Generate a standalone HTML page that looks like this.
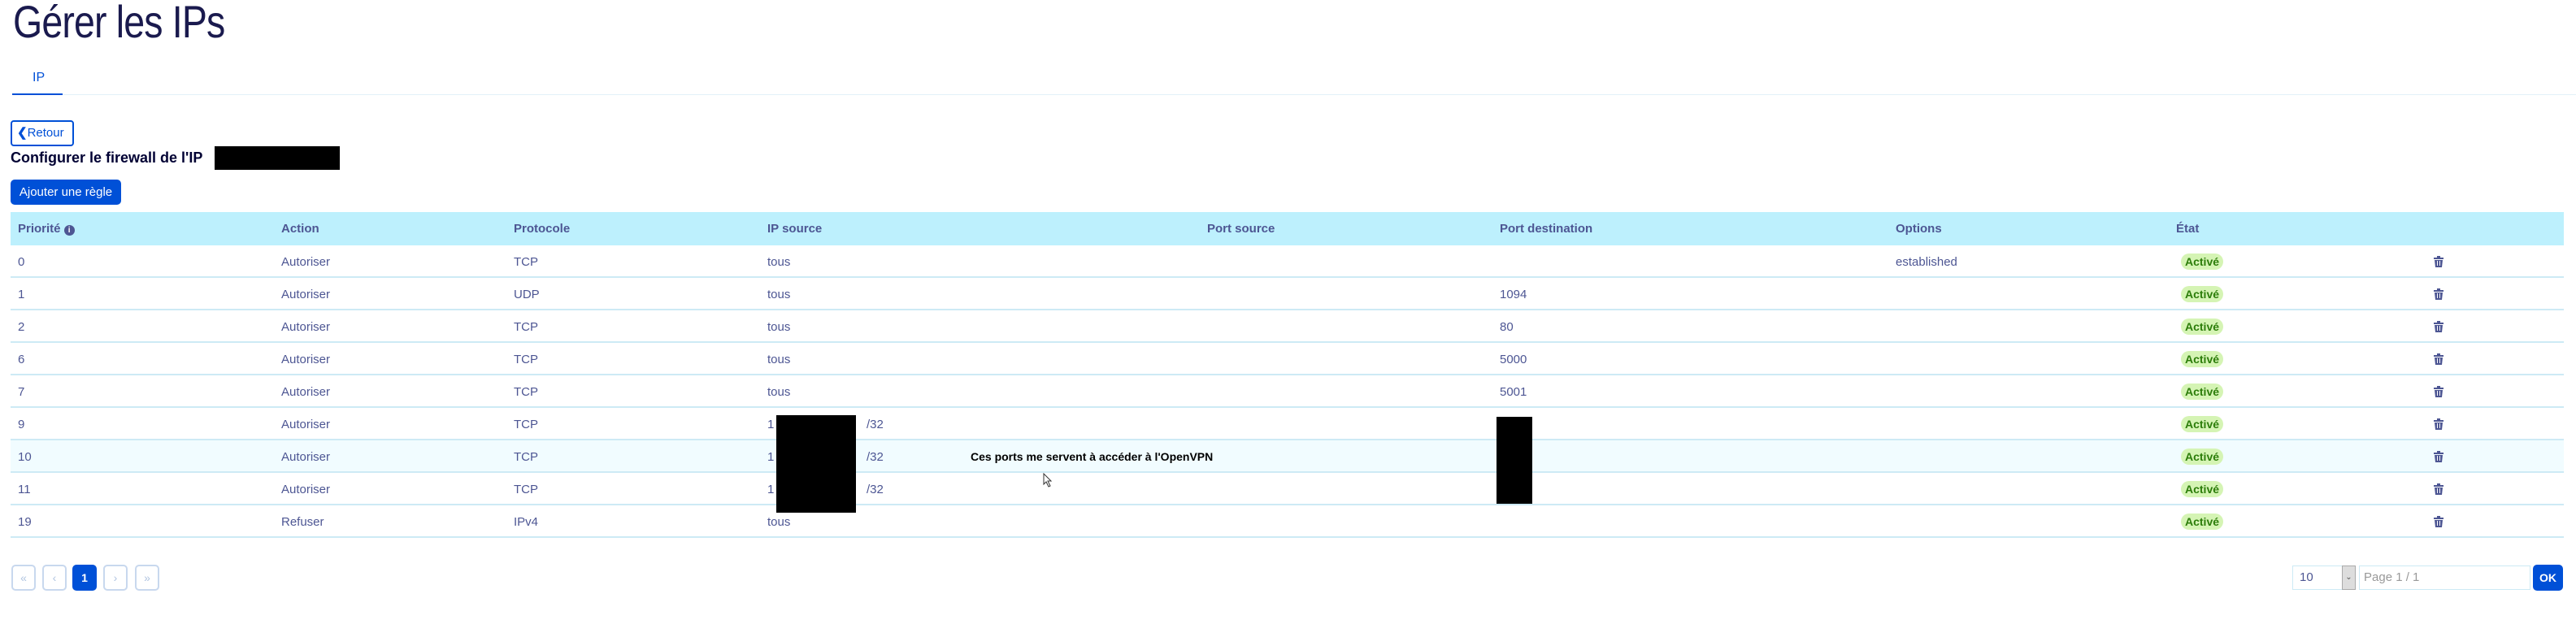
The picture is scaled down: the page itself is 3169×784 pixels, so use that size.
<!DOCTYPE html>
<html><head><meta charset="utf-8"><style>
*{margin:0;padding:0;box-sizing:border-box}
body{width:3169px;height:784px;background:#fff;position:relative;overflow:hidden;font-family:"Liberation Sans",sans-serif;color:#4d5693}
.a{position:absolute;white-space:nowrap}
.title{left:16px;top:-6px;font-size:56px;color:#1a1a4e;font-weight:300;transform:scaleX(.83);transform-origin:left top;letter-spacing:-1px}
.row{position:absolute;left:13px;width:3141px;height:40px;border-bottom:2px solid #cdeaf5;font-size:15px}
.row span{position:absolute;top:12px}
.hdr{position:absolute;left:13px;top:261px;width:3141px;height:41px;background:#bdf0fd;font-size:15px;font-weight:bold;color:#4d5693}
.hdr span{position:absolute;top:12px}
.pill{background:#d5f4b4;color:#2c7d0a;border-radius:10px;padding:2px 5px;font-size:14px;top:10px!important;font-weight:bold}
.tr{top:13px!important}
.pg{position:absolute;top:695px;width:30px;height:32px;border:2px solid #c8d8ee;border-radius:5px;color:#b0c4e0;font-size:14px;text-align:center;line-height:28px}
</style></head><body>
<svg width="0" height="0" style="position:absolute"><defs><symbol id="t" viewBox="0 0 12 14"><rect x="0" y="2" width="12" height="2" fill="#4d5693"/><rect x="4" y="0" width="4" height="2" fill="#4d5693"/><path d="M1 5 H11 L10 14 H2 Z" fill="#4d5693"/><rect x="4" y="6" width="1" height="6" fill="#fff"/><rect x="7" y="6" width="1" height="6" fill="#fff"/></symbol></defs></svg>
<div class="a title">Gérer les IPs</div>
<div class="a" style="left:40px;top:87px;font-size:16px;color:#0050d7">IP</div>
<div class="a" style="left:15px;top:115px;width:62px;height:2px;background:#0050d7"></div>
<div class="a" style="left:77px;top:116px;width:3092px;height:1px;background:#e3f1f8"></div>
<div class="a" style="left:13px;top:148px;width:78px;height:32px;border:2px solid #0050d7;border-radius:4px;color:#0050d7;font-size:15px;line-height:28px;padding-left:6px"><b>&#10094;</b>Retour</div>
<div class="a" style="left:13px;top:184px;font-size:18px;font-weight:bold;color:#000033">Configurer le firewall de l'IP</div>
<div class="a" style="left:264px;top:180px;width:154px;height:29px;background:#000"></div>
<div class="a" style="left:13px;top:221px;width:136px;height:31px;background:#0050d7;border-radius:5px;color:#fff;font-size:15px;line-height:31px;text-align:center">Ajouter une règle</div>
<div class="hdr"><span style="left:9px">Priorité <span style="position:static;display:inline-block;width:13px;height:13px;border-radius:50%;background:#4d5693;color:#fff;font-size:10px;text-align:center;line-height:13px">i</span></span><span style="left:333px">Action</span><span style="left:619px">Protocole</span><span style="left:931px">IP source</span><span style="left:1472px">Port source</span><span style="left:1832px">Port destination</span><span style="left:2319px">Options</span><span style="left:2664px">État</span></div>
<div class="row" style="top:302px"><span style="left:9px">0</span><span style="left:333px">Autoriser</span><span style="left:619px">TCP</span><span style="left:931px">tous</span><span style="left:2319px">established</span><span class="pill" style="left:2670px">Activé</span><span class="tr" style="left:2981px"><svg width="12" height="14"><use href="#t"/></svg></span></div>
<div class="row" style="top:342px"><span style="left:9px">1</span><span style="left:333px">Autoriser</span><span style="left:619px">UDP</span><span style="left:931px">tous</span><span style="left:1832px">1094</span><span class="pill" style="left:2670px">Activé</span><span class="tr" style="left:2981px"><svg width="12" height="14"><use href="#t"/></svg></span></div>
<div class="row" style="top:382px"><span style="left:9px">2</span><span style="left:333px">Autoriser</span><span style="left:619px">TCP</span><span style="left:931px">tous</span><span style="left:1832px">80</span><span class="pill" style="left:2670px">Activé</span><span class="tr" style="left:2981px"><svg width="12" height="14"><use href="#t"/></svg></span></div>
<div class="row" style="top:422px"><span style="left:9px">6</span><span style="left:333px">Autoriser</span><span style="left:619px">TCP</span><span style="left:931px">tous</span><span style="left:1832px">5000</span><span class="pill" style="left:2670px">Activé</span><span class="tr" style="left:2981px"><svg width="12" height="14"><use href="#t"/></svg></span></div>
<div class="row" style="top:462px"><span style="left:9px">7</span><span style="left:333px">Autoriser</span><span style="left:619px">TCP</span><span style="left:931px">tous</span><span style="left:1832px">5001</span><span class="pill" style="left:2670px">Activé</span><span class="tr" style="left:2981px"><svg width="12" height="14"><use href="#t"/></svg></span></div>
<div class="row" style="top:502px"><span style="left:9px">9</span><span style="left:333px">Autoriser</span><span style="left:619px">TCP</span><span style="left:931px">1</span><span style="left:1053px">/32</span><span class="pill" style="left:2670px">Activé</span><span class="tr" style="left:2981px"><svg width="12" height="14"><use href="#t"/></svg></span></div>
<div class="row" style="top:542px;background:#f1fcff"><span style="left:9px">10</span><span style="left:333px">Autoriser</span><span style="left:619px">TCP</span><span style="left:931px">1</span><span style="left:1053px">/32</span><span style="left:1181px;color:#000;font-weight:bold;font-size:14px">Ces ports me servent à accéder à l'OpenVPN</span><span class="pill" style="left:2670px">Activé</span><span class="tr" style="left:2981px"><svg width="12" height="14"><use href="#t"/></svg></span></div>
<div class="row" style="top:582px"><span style="left:9px">11</span><span style="left:333px">Autoriser</span><span style="left:619px">TCP</span><span style="left:931px">1</span><span style="left:1053px">/32</span><span class="pill" style="left:2670px">Activé</span><span class="tr" style="left:2981px"><svg width="12" height="14"><use href="#t"/></svg></span></div>
<div class="row" style="top:622px"><span style="left:9px">19</span><span style="left:333px">Refuser</span><span style="left:619px">IPv4</span><span style="left:931px">tous</span><span class="pill" style="left:2670px">Activé</span><span class="tr" style="left:2981px"><svg width="12" height="14"><use href="#t"/></svg></span></div>
<div class="a" style="left:955px;top:511px;width:98px;height:120px;background:#000"></div>
<div class="a" style="left:1841px;top:513px;width:44px;height:107px;background:#000"></div>
<svg class="a" style="left:1283px;top:582px" width="12" height="18"><path d="M1 1 L1 14 L4 11 L7 17 L9 16 L6 10 L10 10 Z" fill="#fff" stroke="#333" stroke-width="1"/></svg>
<div class="pg" style="left:14px">«</div><div class="pg" style="left:52px">‹</div>
<div class="pg" style="left:89px;background:#0050d7;border-color:#0050d7;color:#fff;font-weight:bold">1</div>
<div class="pg" style="left:127px">›</div><div class="pg" style="left:166px">»</div>
<div class="a" style="left:2820px;top:696px;width:78px;height:30px;border:1px solid #cdeaf5;font-size:15px;line-height:28px;padding-left:8px">10</div>
<div class="a" style="left:2881px;top:696px;width:17px;height:30px;background:#ddd;border:1px solid #aaa;font-size:10px;text-align:center;line-height:28px;color:#555">&#8964;</div>
<div class="a" style="left:2902px;top:696px;width:211px;height:30px;border:1px solid #cdeaf5;font-size:15px;line-height:28px;padding-left:5px;color:#999">Page 1 / 1</div>
<div class="a" style="left:3116px;top:695px;width:37px;height:32px;background:#0050d7;border-radius:5px;color:#fff;font-weight:bold;font-size:14px;text-align:center;line-height:32px">OK</div>
</body></html>
